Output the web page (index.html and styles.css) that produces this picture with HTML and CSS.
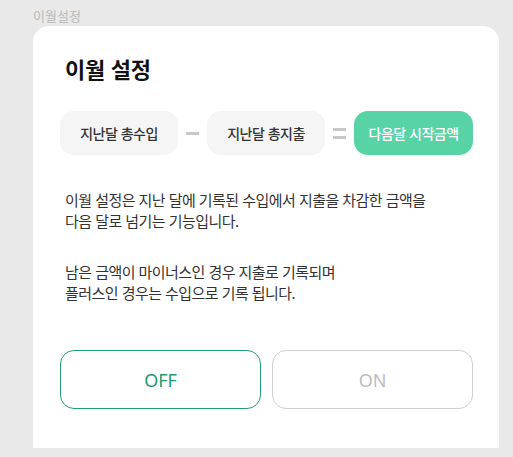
FILE: index.html
```html
<!DOCTYPE html>
<html lang="ko">
<head>
    <meta charset="UTF-8">
    <meta name="viewport" content="width=device-width, initial-scale=1.0">
    <title>이월설정</title>
    <link rel="stylesheet" href="styles.css">
</head>
<body>
    <div class="page">
        <div class="page-label">이월설정</div>

        <div class="card">
            <h1 class="card-title">이월 설정</h1>

            <div class="formula">
                <div class="pill">지난달 총수입</div>
                <span class="op op-minus"><i></i></span>
                <div class="pill">지난달 총지출</div>
                <span class="op op-equal"><i></i><i></i></span>
                <div class="pill pill-result">다음달 시작금액</div>
            </div>

            <p class="desc">이월 설정은 지난 달에 기록된 수입에서 지출을 차감한 금액을<br>다음 달로 넘기는 기능입니다.</p>
            <p class="desc">남은 금액이 마이너스인 경우 지출로 기록되며<br>플러스인 경우는 수입으로 기록 됩니다.</p>

            <div class="toggle">
                <button class="toggle-btn active">OFF</button>
                <button class="toggle-btn">ON</button>
            </div>
        </div>
    </div>
</body>
</html>
```

FILE: styles.css
```css
body {
    margin: 0;
    background: #e9e9e9;
    font-family: "Noto Sans CJK KR", "Noto Sans", sans-serif;
    color: #222;
}

.page {
    padding: 6px 14px 0 33px;
}

.page-label {
    font-size: 13px;
    line-height: 20px;
    color: #b9b9b9;
}

.card {
    width: 466px;
    height: 422px;
    box-sizing: border-box;
    background: white;
    border-radius: 16px 16px 0 0;
    padding: 28px 26px 0 27px;
}

.card-title {
    margin: 0;
    font-size: 22px;
    line-height: 28px;
    font-weight: bold;
    color: #111;
    letter-spacing: -0.3px;
    padding-left: 5px;
}

.formula {
    display: flex;
    align-items: center;
    gap: 8px;
    margin-top: 29px;
}

.pill {
    width: 118px;
    height: 44px;
    border-radius: 14px;
    background: #f5f5f5;
    display: flex;
    align-items: center;
    justify-content: center;
    font-size: 14px;
    font-weight: 500;
    color: #333;
    letter-spacing: -0.5px;
}

.pill-result {
    width: 119px;
    background: #57d3a5;
    color: white;
}

.op {
    width: 13px;
    display: flex;
    flex-direction: column;
    gap: 5px;
}

.op i {
    display: block;
    height: 3px;
    background: #c8c8c8;
}

.desc {
    margin: 0;
    padding-left: 5px;
    font-size: 15px;
    line-height: 21px;
    color: #333;
    letter-spacing: -0.55px;
}

.formula + .desc {
    margin-top: 34px;
}

.desc + .desc {
    margin-top: 30px;
}

.toggle {
    display: flex;
    gap: 11px;
    margin-top: 47px;
}

.toggle-btn {
    flex: 1;
    height: 59px;
    border-radius: 14px;
    border: 1.5px solid #cfcfcf;
    background: white;
    font-family: "Noto Sans", sans-serif;
    font-size: 18px;
    color: #bdbdbd;
    cursor: pointer;
}

.toggle-btn.active {
    border-color: #23a070;
    color: #23996a;
}
```
